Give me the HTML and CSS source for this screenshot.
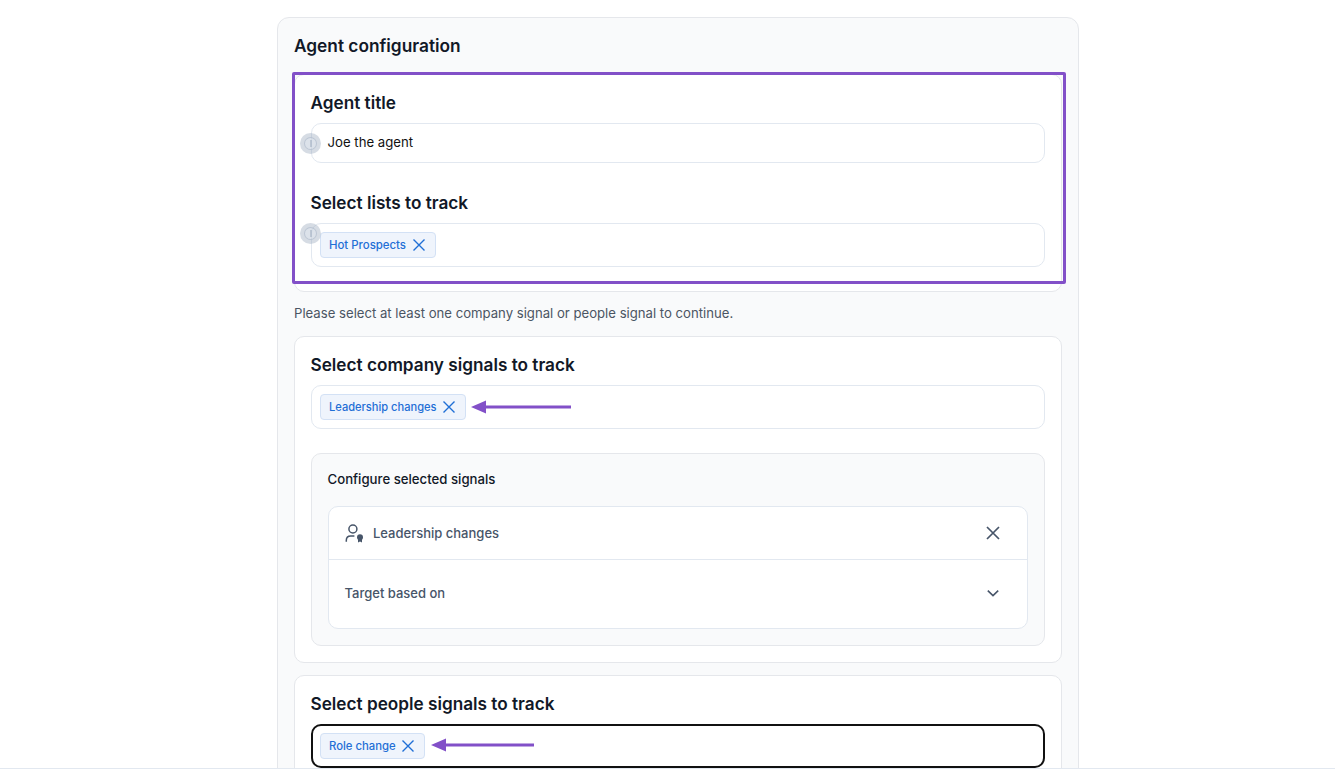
FILE: index.html
```html
<!DOCTYPE html>
<html lang="en">
<head>
  <meta charset="UTF-8" />
  <title>Agent configuration</title>
  <link rel="stylesheet" href="styles.css">
</head>
<body>
  <div class="panel">
    <h2 class="panel-title">Agent configuration</h2>

    <div class="card card-top">
      <div class="highlight"></div>
      <h3>Agent title</h3>
      <div class="field text-field">
        <span class="hotspot"><i></i></span>
        Joe the agent
      </div>
      <h3 class="second">Select lists to track</h3>
      <div class="field">
        <span class="hotspot hotspot-tags"><i></i></span>
        <span class="chip chip-wide">Hot Prospects
          <svg width="14" height="14" viewBox="0 0 14 14"><path d="M1.5 1.5l11 11M12.5 1.5l-11 11" /></svg>
        </span>
      </div>
    </div>

    <p class="hint">Please select at least one company signal or people signal to continue.</p>

    <div class="card card-company">
      <h3>Select company signals to track</h3>
      <div class="field">
        <span class="chip chip-tight">Leadership changes
          <svg width="14" height="14" viewBox="0 0 14 14"><path d="M1.5 1.5l11 11M12.5 1.5l-11 11" /></svg>
        </span>
        <svg class="arrow" width="101" height="14" viewBox="0 0 101 14"><path class="arrow-line" d="M12 7H100" /><path class="arrow-head" d="M0 7L15 0.5V13.5Z" /></svg>
      </div>

      <div class="configure">
        <h4>Configure selected signals</h4>
        <div class="signal-box">
          <div class="signal-row signal-head">
            <div class="signal-name">
              <svg class="person" width="20" height="20" viewBox="0 0 20 20">
                <circle cx="7.9" cy="6" r="4" />
                <path d="M1.3 18.7v-1.2c0-2.6 1.8-4.4 4.4-4.4h3.7" />
                <circle class="badge" cx="15" cy="14.3" r="3" />
                <path class="badge" d="M13 16v3.4l2-1 2 1V16z" />
              </svg>
              Leadership changes
            </div>
            <svg class="close-icon" width="16" height="16" viewBox="0 0 16 16"><path d="M2 2l12 12M14 2L2 14" /></svg>
          </div>
          <div class="signal-row signal-target">
            <span>Target based on</span>
            <svg class="chevron" width="14" height="14" viewBox="0 0 14 14"><path d="M1.8 4.6L7 9.6l5.2-5" /></svg>
          </div>
        </div>
      </div>
    </div>

    <div class="card card-people">
      <h3>Select people signals to track</h3>
      <div class="field field-focus">
        <span class="chip">Role change
          <svg width="14" height="14" viewBox="0 0 14 14"><path d="M1.5 1.5l11 11M12.5 1.5l-11 11" /></svg>
        </span>
        <svg class="arrow" width="104" height="14" viewBox="0 0 104 14"><path class="arrow-line" d="M12 7H103" /><path class="arrow-head" d="M0 7L15 0.5V13.5Z" /></svg>
      </div>
    </div>
  </div>
</body>
</html>
```
FILE: styles.css
```css
html {
  height: 769px;
  overflow: hidden;
}
body {
  margin: 0;
  height: 769px;
  box-sizing: border-box;
  overflow: hidden;
  background: #fff;
  border-bottom: 1px solid #e2e8f0;
  font-family: 'Inter', sans-serif;
  color: #111827;
}
h2, h3, h4, p {
  margin: 0;
}
.panel {
  width: 768px;
  margin: 17px auto 0 277px;
  padding: 16px;
  background: #f9fafb;
  border: 1px solid #e5e7eb;
  border-radius: 12px;
}
.panel-title {
  font-size: 17.3px;
  line-height: 24px;
  font-weight: 600;
  margin-bottom: 16px;
}
.card {
  position: relative;
  background: #fff;
  border: 1px solid #e5e7eb;
  border-radius: 10px;
  padding: 16px;
}
.card h3 {
  font-size: 17.2px;
  line-height: 24px;
  font-weight: 600;
  margin-bottom: 8px;
  margin-left: -0.5px;
}
.card h3.second {
  margin-top: 28px;
}
.card-top {
  padding-top: 16px;
  padding-bottom: 24px;
}
.highlight {
  position: absolute;
  left: -3px;
  right: -5px;
  top: -3px;
  bottom: 7px;
  border: 3px solid #8250c8;
  border-radius: 2px;
}
.hint {
  font-size: 13.15px;
  line-height: 20px;
  color: #4b5563;
  margin: 11px 0 13px;
}
.field {
  position: relative;
  display: flex;
  align-items: center;
  min-height: 42px;
  padding: 0 8px;
  background: #fff;
  border: 1px solid #e2e8f0;
  border-radius: 10px;
}
.text-field {
  min-height: 36px;
  padding: 0 15.5px 2px;
  font-size: 13.2px;
  color: #111;
}
.field-focus {
  border: 2px solid #111;
  min-height: 39px;
  padding: 0 7px 1px;
}
.chip {
  display: inline-flex;
  align-items: center;
  gap: 5px;
  height: 24px;
  padding: 0 9px 0 8px;
  font-size: 11.3px;
  font-weight: 500;
  color: #1f6fd6;
  background: #eff4fc;
  border: 1px solid #d3e1f5;
  border-radius: 4px;
}
.chip-wide {
  font-size: 11.4px;
  gap: 6px;
}
.chip-tight {
  font-size: 11.1px;
}
.chip svg {
  stroke: #1f6fd6;
  stroke-width: 1.4;
  fill: none;
}
.arrow {
  margin-left: 5px;
  margin-top: -1px;
}
.field-focus .arrow {
  margin-left: 6px;
}
.arrow-line {
  stroke: #8250c8;
  stroke-width: 3;
}
.arrow-head {
  fill: #8250c8;
}
.hotspot {
  position: absolute;
  left: -11px;
  top: 9px;
  width: 21px;
  height: 21px;
  margin-left: -1px;
  border-radius: 50%;
  background: rgba(148, 163, 184, 0.38);
  display: flex;
  align-items: center;
  justify-content: center;
}
.hotspot-tags {
  top: -1px;
}
.hotspot i {
  position: relative;
  width: 13px;
  height: 13px;
  border-radius: 50%;
  background: rgba(226, 232, 240, 0.5);
  border: 1px solid rgba(148, 163, 184, 0.45);
  box-sizing: border-box;
}
.hotspot i::before {
  content: "";
  position: absolute;
  left: 4.5px;
  top: 2px;
  width: 2px;
  height: 7px;
  background: rgba(148, 163, 184, 0.45);
}
.configure {
  margin-top: 24px;
  background: #f9fafb;
  border: 1px solid #e5e7eb;
  border-radius: 10px;
  padding: 15px 16px 16px;
}
.configure h4 {
  font-size: 13.2px;
  line-height: 20px;
  font-weight: 500;
  margin-bottom: 17px;
  margin-left: -0.5px;
}
.signal-box {
  background: #fff;
  border: 1px solid #e2e8f0;
  border-radius: 10px;
}
.signal-row {
  display: flex;
  align-items: center;
  justify-content: space-between;
  padding: 0 26px 0 16px;
  font-size: 13px;
  font-weight: 500;
  color: #475569;
}
.signal-head {
  height: 53px;
  padding-bottom: 1px;
  box-sizing: border-box;
  border-bottom: 1px solid #e2e8f0;
}
.signal-target {
  height: 68px;
  padding-bottom: 2px;
  box-sizing: border-box;
  padding-right: 27px;
  padding-left: 15.5px;
}
.signal-name {
  display: flex;
  align-items: center;
  gap: 8px;
}
.person {
  fill: none;
  stroke: #475569;
  stroke-width: 1.5;
}
.person .badge {
  fill: #475569;
  stroke: none;
}
.close-icon {
  stroke: #475569;
  stroke-width: 1.7;
  fill: none;
}
.chevron {
  stroke: #475569;
  stroke-width: 1.6;
  fill: none;
}
.card-company {
  padding-top: 16px;
}
.card-people {
  margin-top: 12px;
}
```
